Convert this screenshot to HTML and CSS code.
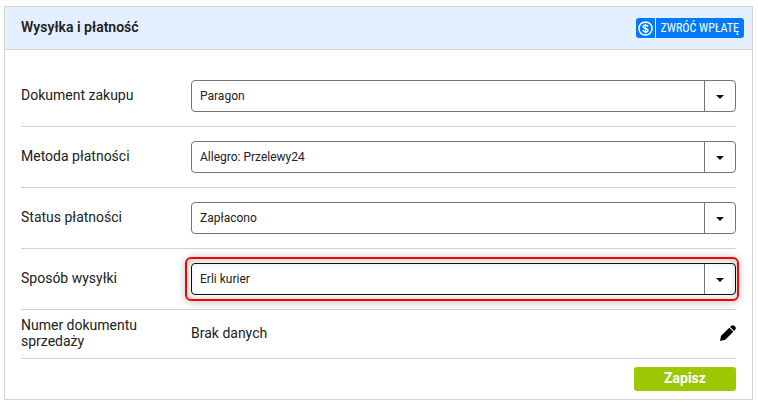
FILE: index.html
```html
<!DOCTYPE html>
<html lang="pl">
<head>
  <meta charset="UTF-8" />
  <meta name="viewport" content="width=device-width, initial-scale=1.0"/>
  <title>Wysyłka i płatność</title>
  <link rel="stylesheet" href="styles.css">
</head>
<body>
  <form class="panel">
    <div class="panel-header">
      <h2>Wysyłka i płatność</h2>
      <button type="button" class="refund-btn">
        <span class="refund-icon">
          <svg width="15" height="15" viewBox="0 0 15 15" fill="none" stroke="#fff" aria-hidden="true">
            <circle cx="7.5" cy="7.5" r="6.6" stroke-width="1.5"/>
            <path d="M10 5.6C9.7 4.6 8.8 4.2 7.5 4.2C6.1 4.2 5.1 4.8 5.1 5.8C5.1 8 10 6.9 10 9.2C10 10.2 8.9 10.8 7.5 10.8C6.1 10.8 5.2 10.3 4.9 9.3M7.5 2.8V12.2" stroke-width="1.4"/>
          </svg>
        </span>
        <span class="refund-text">ZWRÓĆ WPŁATĘ</span>
      </button>
    </div>

    <div class="panel-body">
      <div class="row">
        <label for="document">Dokument zakupu</label>
        <div class="select-box">
          <select id="document">
            <option>Paragon</option>
          </select>
        </div>
      </div>
      <div class="row">
        <label for="payment">Metoda płatności</label>
        <div class="select-box">
          <select id="payment">
            <option>Allegro: Przelewy24</option>
          </select>
        </div>
      </div>
      <div class="row">
        <label for="status">Status płatności</label>
        <div class="select-box">
          <select id="status">
            <option>Zapłacono</option>
          </select>
        </div>
      </div>
      <div class="row">
        <label for="shipping">Sposób wysyłki</label>
        <div class="select-box highlighted">
          <select id="shipping">
            <option>Erli kurier</option>
          </select>
          <span class="highlight"></span>
        </div>
      </div>
      <div class="row row-number">
        <span class="row-name">Numer dokumentu sprzedaży</span>
        <span class="row-value">Brak danych</span>
        <button type="button" class="edit-btn" aria-label="Edytuj">
          <svg width="16" height="16" viewBox="0 0 16 16" aria-hidden="true">
            <path d="M0 16L1.1 10.8L9.3 2.7L13.3 6.7L5.2 14.7Z"/>
            <path d="M10.1 1.9L11.4 0.7Q13 -0.5 14.5 1L15.1 1.6Q16.5 3.1 15.3 4.6L14.1 5.9Z"/>
          </svg>
        </button>
      </div>
      <div class="actions">
        <button type="submit" class="save-btn">Zapisz</button>
      </div>
    </div>
  </form>
</body>
</html>
```
FILE: styles.css
```css
* {
  box-sizing: border-box;
  font-family: Roboto, 'Liberation Sans', sans-serif;
  margin: 0;
  padding: 0;
}

body {
  background: #fff;
  padding: 6px 5px 6px 4px;
  color: #212121;
  font-size: 14px;
  line-height: 16px;
}

.panel {
  border: 1px solid #d3d3d3;
}

.panel-header {
  display: flex;
  justify-content: space-between;
  align-items: center;
  padding: 11px 8px 11px 16px;
  background: #e4f0ff;
  border-bottom: 1px solid #d3d3d3;
}

.panel-header h2 {
  padding-bottom: 2px;
  font-size: 14px;
  font-weight: 600;
}

.refund-btn {
  display: flex;
  height: 20px;
  border: none;
  border-radius: 3px;
  overflow: hidden;
  background: #007bff;
  color: #fff;
  cursor: pointer;
}

.refund-icon {
  display: flex;
  align-items: center;
  justify-content: center;
  width: 20px;
  height: 20px;
  border-right: 1px solid #fff;
}

.refund-text {
  padding: 0 5px;
  font-family: 'Liberation Sans Narrow', 'Roboto Condensed', Roboto, sans-serif;
  font-size: 12px;
  line-height: 21px;
}

.panel-body {
  padding: 16px 16px 8px;
}

.row {
  display: flex;
  align-items: center;
  padding: 14px 0;
  border-bottom: 1px solid #d3d3d3;
}

.row label,
.row-name {
  width: 170px;
  flex-shrink: 0;
  padding: 0 40px 2px 0;
}

.select-box {
  position: relative;
  flex: 1;
}

.select-box select {
  display: block;
  width: 100%;
  height: 32px;
  padding: 0 40px 0 8px;
  border: 1px solid #757575;
  border-radius: 4px;
  background: #fff;
  color: #212121;
  font-size: 12px;
  appearance: none;
}

/* divider and arrow at the right of the select */
.select-box::before {
  content: "";
  position: absolute;
  top: 1px;
  bottom: 1px;
  right: 31px;
  border-left: 1px solid #757575;
  pointer-events: none;
}

.select-box::after {
  content: "";
  position: absolute;
  top: 15px;
  right: 12px;
  border: 4px solid transparent;
  border-top-color: #111;
  border-bottom: none;
  pointer-events: none;
}

.highlighted select {
  border-color: #111;
}

.highlight {
  position: absolute;
  top: -6px;
  bottom: -6px;
  left: -6px;
  right: -3px;
  border: 2px solid #f00;
  border-radius: 6px;
  box-shadow: 0 1px 8px rgba(0,0,0,0.25), inset 0 1px 8px rgba(0,0,0,0.25);
  pointer-events: none;
}

.row-number {
  padding: 8px 0;
}

.row-number .row-name {
  margin: -1px 0;
}

.row-value {
  flex: 1;
  padding-bottom: 2px;
}

.edit-btn {
  display: flex;
  padding-bottom: 2px;
  border: none;
  background: none;
  cursor: pointer;
}

.actions {
  display: flex;
  justify-content: flex-end;
  padding-top: 8px;
}

.save-btn {
  width: 102px;
  height: 24px;
  padding-bottom: 2px;
  border: none;
  border-radius: 3px;
  background: #9dc603;
  color: #fff;
  font-size: 14px;
  font-weight: 700;
  cursor: pointer;
}
```
